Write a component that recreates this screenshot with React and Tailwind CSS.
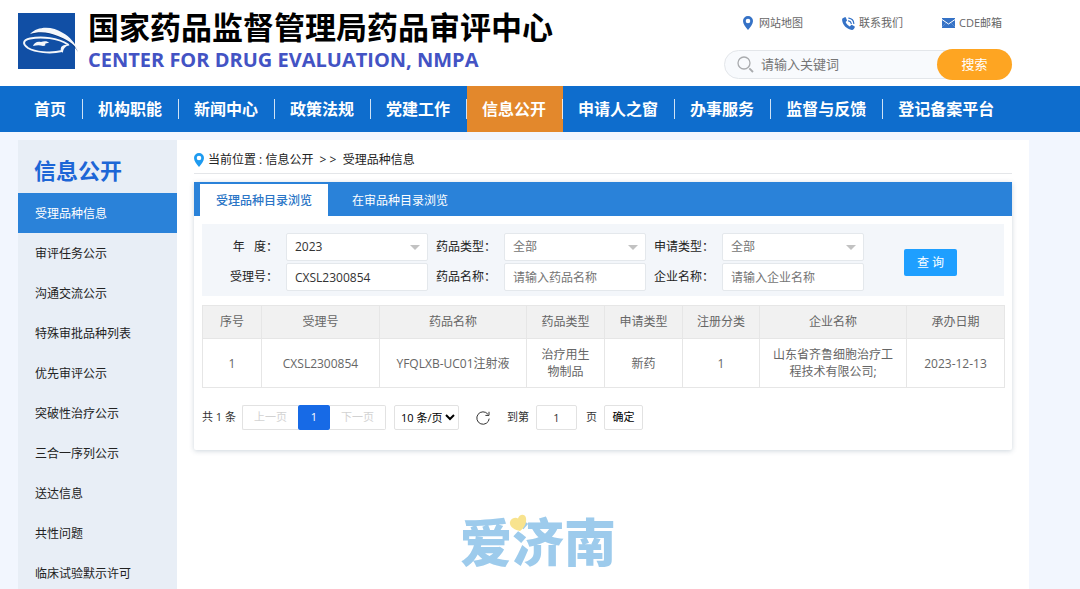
import { useState } from 'react';

const NAV = [
  '首页',
  '机构职能',
  '新闻中心',
  '政策法规',
  '党建工作',
  '信息公开',
  '申请人之窗',
  '办事服务',
  '监督与反馈',
  '登记备案平台',
];

const SIDE_MENU = [
  '受理品种信息',
  '审评任务公示',
  '沟通交流公示',
  '特殊审批品种列表',
  '优先审评公示',
  '突破性治疗公示',
  '三合一序列公示',
  '送达信息',
  '共性问题',
  '临床试验默示许可',
];

const COLUMNS = [
  { title: '序号', width: 'w-[59px]' },
  { title: '受理号', width: 'w-[118px]' },
  { title: '药品名称', width: 'w-[147px]' },
  { title: '药品类型', width: 'w-[78px]' },
  { title: '申请类型', width: 'w-[78px]' },
  { title: '注册分类', width: 'w-[77px]' },
  { title: '企业名称', width: 'w-[147px]' },
  { title: '承办日期', width: 'w-[98px]' },
];

const ROWS = [
  ['1', 'CXSL2300854', 'YFQLXB-UC01注射液', '治疗用生物制品', '新药', '1', '山东省齐鲁细胞治疗工程技术有限公司;', '2023-12-13'],
];

function PinIcon({ className }) {
  return (
    <svg viewBox="0 0 10 14" className={className} aria-hidden="true">
      <path
        fill="currentColor"
        fillRule="evenodd"
        d="M5 0a5 5 0 0 1 5 5c0 3.200-2.500 6-5 9-2.500-3-5-5.800-5-9a5 5 0 0 1 5-5zM5 2.700a2.300 2.300 0 1 0 0 4.600 2.300 2.300 0 0 0 0-4.600z"
      />
    </svg>
  );
}

function PhoneIcon({ className }) {
  return (
    <svg viewBox="0 0 13 13" className={className} aria-hidden="true">
      <path
        fill="currentColor"
        d="M1.200 1 2.800.2c.4-.2.800 0 1 .4l1.100 2.300c.2.400.1.800-.2 1.100L3.600 5c.7 1.800 2.200 3.500 4.200 4.400l1.200-1.200c.3-.3.700-.4 1.100-.2l2.300 1.200c.4.200.6.700.4 1.100l-.8 1.500c-.4.800-1.200 1.200-2 1.100C4.800 12.300.7 8.200.1 3 0 2.200.4 1.400 1.200 1z"
      />
      <path
        d="M6.500 3.800a3.400 3.400 0 0 1 2.800 2.900M6.800 1.200a5.800 5.800 0 0 1 5 5.300"
        fill="none"
        stroke="currentColor"
        strokeWidth="1.200"
        strokeLinecap="round"
      />
    </svg>
  );
}

function MailIcon({ className }) {
  return (
    <svg viewBox="0 0 13 10" className={className} aria-hidden="true">
      <rect width="13" height="10" fill="currentColor" />
      <path d="M0 1.500 6.500 6 13 1.500" fill="none" stroke="#fff" strokeWidth="1" />
      <path d="M0 9 3.800 5.200M13 9 9.200 5.200" stroke="#fff" strokeWidth=".4" opacity=".5" />
    </svg>
  );
}

function SearchIcon({ className }) {
  return (
    <svg viewBox="0 0 17 17" className={className} fill="none" stroke="currentColor" aria-hidden="true">
      <circle cx="7" cy="7" r="6" strokeWidth="1.300" />
      <path d="M12.300 12.300 16 16" strokeWidth="1.900" />
    </svg>
  );
}

function RefreshIcon({ className }) {
  return (
    <svg viewBox="0 0 14 14" className={className} fill="none" stroke="currentColor" aria-hidden="true">
      <path d="M13.200 7.600A6.200 6.200 0 1 1 11.900 3.200" />
      <path d="M13 .8v3.600H9.400" />
    </svg>
  );
}

function Logo() {
  return (
    <svg viewBox="0 0 61 57" className="h-[57px] w-[61px] shrink-0" aria-hidden="true">
      <rect width="57" height="56" fill="#114fa5" />
      <path fill="#0a2f6e" opacity=".6" d="M13 22C20 15 34 14 45 22c7 4 12 10 15 17-5-8-12-12-20-15-9-4-18-5-27-2z" />
      <path fill="#f4f7fb" d="M12 21C20 13 34 13 45 20c7 4 12 10 15 17-5-7-12-11-20-14-9-4-19-5-28-2z" />
      <path
        fill="none"
        stroke="#f4f7fb"
        strokeWidth="2"
        strokeLinecap="round"
        d="M44 38C32 41 17 39 10 35 4 31 5 27 12 25.500c12-2.500 28-.5 38 6"
      />
      <path fill="#f4f7fb" d="M52 32c-5-1-9 1-9 3-1 1 0 3 2 5 0-4 2-7 7-8z" />
      <path fill="#f4f7fb" d="M15 33c1-3 4-5 8-4 3-1 7-1 8 1-2 0-3 0-4 1 1 1 0 2-2 2-3-1-6-1-10 0z" />
    </svg>
  );
}

function Header() {
  return (
    <header className="flex h-[86px] justify-between bg-white pr-[68px] pl-[18px]">
      <div className="flex gap-[9px] pt-[13px]">
        <Logo />
        <div>
          <h1 className="text-[31px] leading-7 font-bold whitespace-nowrap text-black">国家药品监督管理局药品审评中心</h1>
          <p className="mt-[5px] text-[20px] leading-7 font-bold whitespace-nowrap text-[#4353c4]">
            CENTER FOR DRUG EVALUATION, NMPA
          </p>
        </div>
      </div>

      <div className="w-[288px] pt-[15px]">
        <div className="flex justify-between pr-[10px] pl-[19px] text-[11px] leading-4 text-[#666]">
          <a href="#map" className="flex items-center gap-[6px]">
            <PinIcon className="h-[14px] w-[10px] text-[#3572c6]" />
            网站地图
          </a>
          <a href="#contact" className="flex items-center gap-1">
            <PhoneIcon className="h-[13px] w-[13px] text-[#3572c6]" />
            联系我们
          </a>
          <a href="#mail" className="flex items-center gap-1">
            <MailIcon className="h-[10px] w-[13px] text-[#3572c6]" />
            CDE邮箱
          </a>
        </div>
        <form className="mt-[18px] flex h-[31px] items-center" onSubmit={(e) => e.preventDefault()}>
          <label className="-mr-4 flex h-[29px] flex-1 items-center gap-[7px] rounded-l-full border border-[#e3e6ea] bg-[#f8fafd] pl-3">
            <SearchIcon className="h-[17px] w-[17px] text-[#a9abae]" />
            <input
              aria-label="关键词"
              placeholder="请输入关键词"
              className="w-full min-w-0 flex-1 bg-transparent text-[13px] outline-none placeholder:text-[#757575]"
            />
          </label>
          <button type="submit" className="h-[31px] w-[75px] rounded-full bg-[#fea522] pt-px text-[13px] text-white">
            搜索
          </button>
        </form>
      </div>
    </header>
  );
}

function NavBar() {
  return (
    <nav className="h-[46px] bg-[#0e6dcd] pl-[19px]">
      <ul className="flex h-full">
        {NAV.map((item, i) => (
          <li key={item} className={`flex h-full items-center ${item === '信息公开' ? 'bg-[#e3882c]' : ''}`}>
            <a href="#nav" className="pr-4 pl-[15px] text-base font-bold whitespace-nowrap text-white">
              {item}
            </a>
            {i < NAV.length - 1 && <span className="h-5 w-px bg-white/80" />}
          </li>
        ))}
      </ul>
    </nav>
  );
}

function Sidebar() {
  return (
    <aside className="w-[159px] shrink-0 bg-[#e8eef6]">
      <h2 className="flex h-[53px] items-center pt-2 pl-4 text-[22px] font-bold text-[#1d66d6]">信息公开</h2>
      <ul>
        {SIDE_MENU.map((item, i) => (
          <li key={item}>
            <a
              href="#menu"
              className={`flex h-10 items-center pt-[2px] pl-[17px] text-xs ${i === 0 ? 'bg-[#2a82d9] text-white' : 'text-[#222]'}`}
            >
              {item}
            </a>
          </li>
        ))}
      </ul>
    </aside>
  );
}

const fieldClass =
  'h-7 w-full min-w-0 rounded-xs border border-[#e4e8ec] bg-white px-2 text-xs outline-none placeholder:text-[#757575]';

function SelectField({ id, label, options, muted }) {
  return (
    <>
      <label htmlFor={id} className="text-right whitespace-pre">
        {label}
      </label>
      <div className="relative">
        <select id={id} className={`${fieldClass} appearance-none ${muted ? 'text-[#757575]' : 'text-[#333]'}`}>
          {options.map((o) => (
            <option key={o}>{o}</option>
          ))}
        </select>
        <span className="pointer-events-none absolute top-3 right-2 border-x-5 border-t-5 border-x-transparent border-t-[#c2c2c2]" />
      </div>
    </>
  );
}

function TextField({ id, label, ...props }) {
  return (
    <>
      <label htmlFor={id} className="text-right">
        {label}
      </label>
      <input id={id} className={`${fieldClass} text-[#333]`} {...props} />
    </>
  );
}

function FilterForm() {
  return (
    <form
      className="flex items-center bg-[#f3f6fa] pt-[9px] pr-[47px] pb-[5px] pl-4 text-xs text-[#222]"
      onSubmit={(e) => e.preventDefault()}
    >
      <div className="grid flex-1 grid-cols-[60px_1fr_60px_1fr_60px_1fr] items-center gap-x-2 gap-y-[2px]">
        <SelectField id="year" label={'年   度：'} options={['2023', '2022']} />
        <SelectField id="drugType" label="药品类型：" options={['全部']} muted />
        <SelectField id="applyType" label="申请类型：" options={['全部']} muted />
        <TextField id="acceptNo" label="受理号：" defaultValue="CXSL2300854" />
        <TextField id="drugName" label="药品名称：" placeholder="请输入药品名称" />
        <TextField id="company" label="企业名称：" placeholder="请输入企业名称" />
      </div>
      <button type="submit" className="ml-10 h-[27px] w-[53px] rounded-xs bg-[#1e9fff] pt-px text-xs text-white">
        查 询
      </button>
    </form>
  );
}

function ResultTable() {
  return (
    <table className="mt-[9px] w-full table-fixed border-collapse text-center text-xs text-[#666]">
      <thead>
        <tr className="h-[33px] bg-[#f1f1f1]">
          {COLUMNS.map((c) => (
            <th key={c.title} className={`border border-[#e6e6e6] font-normal ${c.width}`}>
              {c.title}
            </th>
          ))}
        </tr>
      </thead>
      <tbody>
        {ROWS.map((row) => (
          <tr key={row[1]} className="h-[49px]">
            {row.map((cell, i) => (
              <td key={i} className="border border-[#e6e6e6] px-3 leading-[17px]">
                {cell}
              </td>
            ))}
          </tr>
        ))}
      </tbody>
    </table>
  );
}

function Pagination() {
  const [page, setPage] = useState('1');

  return (
    <div className="mt-[17px] flex h-[25px] items-center text-[11px] text-[#333]">
      <span className="w-10">共 1 条</span>
      <button type="button" disabled className="h-full w-14 rounded-l-xs border border-r-0 border-[#e2e2e2] text-[#d2d2d2]">
        上一页
      </button>
      <button type="button" className="h-full w-8 rounded-xs bg-[#176ae6] text-white">
        1
      </button>
      <button type="button" disabled className="h-full w-14 rounded-r-xs border border-l-0 border-[#e2e2e2] text-[#d2d2d2]">
        下一页
      </button>
      <select aria-label="每页条数" className="ml-2 h-full w-[65px] rounded-xs border border-[#e2e2e2] bg-white pl-[2px] text-black">
        <option>10 条/页</option>
        <option>20 条/页</option>
      </select>
      <button type="button" aria-label="刷新" className="ml-[17px]">
        <RefreshIcon className="h-[14px] w-[14px]" />
      </button>
      <label htmlFor="page" className="ml-[17px]">
        到第
      </label>
      <input
        id="page"
        value={page}
        onChange={(e) => setPage(e.target.value)}
        className="mr-[9px] ml-[7px] h-full w-[41px] rounded-xs border border-[#e2e2e2] text-center outline-none"
      />
      <span>页</span>
      <button type="button" className="ml-[7px] h-full w-[39px] rounded-xs border border-[#e2e2e2] text-black">
        确定
      </button>
    </div>
  );
}

function Watermark() {
  return (
    <div className="pointer-events-none absolute top-[375px] left-1/2 -translate-x-1/2 pr-1 text-[52px] leading-[70px] font-black whitespace-nowrap text-[#9dcbec]">
      爱济南
      <svg viewBox="0 0 18 18" className="absolute top-[7px] left-[49px] h-[18px] w-[18px]" aria-hidden="true">
        <path fill="#f8e38e" d="M9 4.500C10 0 16-1 17 4c1 6-3 11-6 13C6 16 0 13 1 8c1-4 6-5 8-3.500z" />
      </svg>
    </div>
  );
}

export default function App() {
  return (
    <div className="relative min-h-screen bg-[#f2f6fe] font-['Open_Sans','Noto_Sans_CJK_SC',sans-serif]">
      <Header />
      <NavBar />
      <div className="relative pt-2">
        <div className="mr-[51px] ml-[18px] flex">
          <Sidebar />
          <main className="min-w-0 flex-1 bg-white px-[17px]">
            <div className="flex h-[34px] items-center gap-1 border-b border-[#e4e6e9] pt-[6px] text-xs text-[#222]">
              <PinIcon className="h-[14px] w-[10px] text-[#1e9bf0]" />
              <span className="whitespace-pre">当前位置 : 信息公开  &gt; &gt;  受理品种信息</span>
            </div>

            <section className="mt-2 rounded-xs pb-5 shadow-[0_1px_5px_rgba(60,90,120,0.25)]">
              <div className="flex h-[34px] items-end bg-[#2a82d9] pl-[6px] text-xs" role="tablist">
                <button
                  type="button"
                  role="tab"
                  aria-selected="true"
                  className="h-8 w-[128px] bg-white pt-[2px] font-medium text-[#2a75c6]"
                >
                  受理品种目录浏览
                </button>
                <button type="button" role="tab" aria-selected="false" className="h-8 w-36 pt-[2px] text-white">
                  在审品种目录浏览
                </button>
              </div>
              <div className="px-2 pt-2">
                <FilterForm />
                <ResultTable />
                <Pagination />
              </div>
            </section>
          </main>
        </div>
        <Watermark />
      </div>
    </div>
  );
}
